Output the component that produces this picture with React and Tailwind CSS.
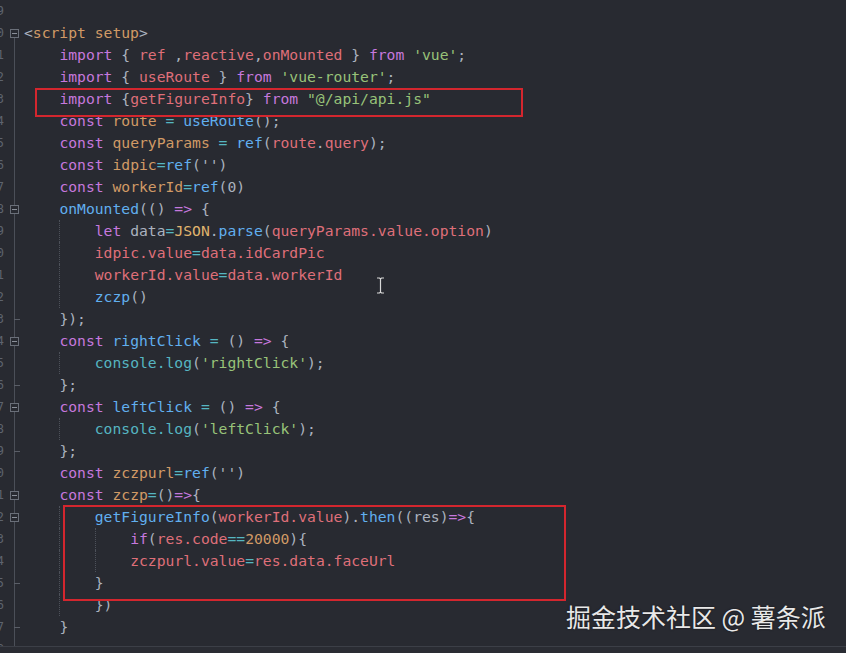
const P = "text-[#abb2bf]";
const K = "text-[#c678dd]";
const R = "text-[#df6f79]";
const O = "text-[#d19a66]";
const Y = "text-[#e0b56e]";
const B = "text-[#61afef]";
const C = "text-[#56b6c2]";
const G = "text-[#98c379]";

const lines = [
  { n: 9, indent: 0, fold: "none", t: [] },
  { n: 10, indent: 0, fold: "start", t: [["<", P], ["script setup", O], [">", P]] },
  { n: 11, indent: 1, t: [["import", K], [" { ", P], ["ref", R], [" ,", P], ["reactive", R], [",", P], ["onMounted", R], [" } ", P], ["from", K], [" ", P], ["'vue'", G], [";", P]] },
  { n: 12, indent: 1, t: [["import", K], [" { ", P], ["useRoute", R], [" } ", P], ["from", K], [" ", P], ["'vue-router'", G], [";", P]] },
  { n: 13, indent: 1, t: [["import", K], [" {", P], ["getFigureInfo", R], ["} ", P], ["from", K], [" ", P], ['"@/api/api.js"', G]] },
  { n: 14, indent: 1, t: [["const", K], [" ", P], ["route", O], [" ", P], ["=", C], [" ", P], ["useRoute", B], ["();", P]] },
  { n: 15, indent: 1, t: [["const", K], [" ", P], ["queryParams", O], [" ", P], ["=", C], [" ", P], ["ref", B], ["(", P], ["route", R], [".", P], ["query", R], [");", P]] },
  { n: 16, indent: 1, t: [["const", K], [" ", P], ["idpic", O], ["=", C], ["ref", B], ["('')", P]] },
  { n: 17, indent: 1, t: [["const", K], [" ", P], ["workerId", O], ["=", C], ["ref", B], ["(0)", P]] },
  { n: 18, indent: 1, fold: "box", t: [["onMounted", B], ["(() ", P], ["=>", K], [" {", P]] },
  { n: 19, indent: 2, t: [["let", K], [" data", P], ["=", C], ["JSON", Y], [".", P], ["parse", B], ["(", P], ["queryParams.value.option", R], [")", P]] },
  { n: 20, indent: 2, t: [["idpic.value", R], ["=", C], ["data.idCardPic", R]] },
  { n: 21, indent: 2, t: [["workerId.value", R], ["=", C], ["data.workerId", R]] },
  { n: 22, indent: 2, t: [["zczp", B], ["()", P]] },
  { n: 23, indent: 1, fold: "end", t: [["});", P]] },
  { n: 24, indent: 1, fold: "box", t: [["const", K], [" ", P], ["rightClick", B], [" ", P], ["=", C], [" () ", P], ["=>", K], [" {", P]] },
  { n: 25, indent: 2, t: [["console.log", C], ["(", P], ["'rightClick'", G], [");", P]] },
  { n: 26, indent: 1, fold: "end", t: [["};", P]] },
  { n: 27, indent: 1, fold: "box", t: [["const", K], [" ", P], ["leftClick", B], [" ", P], ["=", C], [" () ", P], ["=>", K], [" {", P]] },
  { n: 28, indent: 2, t: [["console.log", C], ["(", P], ["'leftClick'", G], [");", P]] },
  { n: 29, indent: 1, fold: "end", t: [["};", P]] },
  { n: 30, indent: 1, t: [["const", K], [" ", P], ["zczpurl", O], ["=", C], ["ref", B], ["('')", P]] },
  { n: 31, indent: 1, fold: "box", t: [["const", K], [" ", P], ["zczp", O], ["=", C], ["()", P], ["=>", K], ["{", P]] },
  { n: 32, indent: 2, fold: "box", t: [["getFigureInfo", B], ["(", P], ["workerId.value", R], [").", P], ["then", B], ["((res)", P], ["=>", K], ["{", P]] },
  { n: 33, indent: 3, t: [["if", K], ["(", P], ["res.code", R], ["==", C], ["20000", O], ["){", P]] },
  { n: 34, indent: 3, t: [["zczpurl.value", R], ["=", C], ["res.data.faceUrl", R]] },
  { n: 35, indent: 2, fold: "end", t: [["}", P]] },
  { n: 36, indent: 2, t: [["})", P]] },
  { n: 37, indent: 1, fold: "end", t: [["}", P]] },
  { n: 38, indent: 0, t: [] },
];

function FoldMark({ kind }) {
  if (kind === "none") return null;
  return (
    <>
      <div className={kind === "start" ? "absolute left-[10px] top-1/2 bottom-0 w-px bg-[#4b4f58]" : "absolute left-[10px] top-0 bottom-0 w-px bg-[#4b4f58]"} />
      {(kind === "start" || kind === "box") && (
        <div className="absolute left-[6px] top-[7px] flex h-[9px] w-[9px] items-center justify-center border border-[#6a6f79] bg-[#282a31]">
          <div className="h-px w-[5px] bg-[#8a8f99]" />
        </div>
      )}
      {kind === "end" && <div className="absolute left-[10px] top-[11px] h-px w-[6px] bg-[#5a5e67]" />}
    </>
  );
}

function CodeLine({ l }) {
  const guides = [];
  for (let i = 0; i < l.indent; i++) {
    guides.push(
      <span
        key={i}
        className={i === 0 ? "inline-block h-full w-[35.4px]" : "inline-block h-full w-[35.4px] border-l border-dotted border-[#4d515a]"}
      />
    );
  }
  return (
    <div className="flex h-[22px]">
      <div className="flex h-full w-[4px] justify-end overflow-hidden">
        <span className="font-['DejaVu_Sans_Mono',monospace] text-[12px] leading-[22px] text-[#5d636e]">{l.n}</span>
      </div>
      <div className="relative h-full w-[20px]">
        <FoldMark kind={l.fold} />
      </div>
      <div className="flex h-full items-stretch whitespace-pre font-['DejaVu_Sans_Mono',monospace] text-[14.7px] leading-[22px]">
        {guides}
        <span>
          {l.t.map(([txt, cls], i) => (
            <span key={i} className={cls}>{txt}</span>
          ))}
        </span>
      </div>
    </div>
  );
}

export default function App() {
  return (
    <div className="flex h-[653px] w-[846px] flex-col overflow-hidden bg-[#282a31]">
      <div className="relative h-[646px] overflow-hidden">
        {lines.map((l) => (
          <CodeLine key={l.n} l={l} />
        ))}

        {/* highlight boxes */}
        <div className="absolute left-[35px] top-[88px] h-[29px] w-[488px] border-2 border-[#d4262e]" />
        <div className="absolute left-[63px] top-[505px] h-[96px] w-[503px] border-2 border-[#d4262e]" />

        {/* mouse cursor */}
        <svg className="absolute left-[376px] top-[277px]" width="9" height="17" viewBox="0 0 9 17">
          <path d="M1 1h2.5l1 1 1-1H8M4.5 2v13M1 16h2.5l1-1 1 1H8" fill="none" stroke="#d8d8d8" strokeWidth="1.2" />
        </svg>

        {/* watermark */}
        <div className="absolute left-[566px] top-[604px] whitespace-nowrap font-['Noto_Sans_CJK_SC',sans-serif] text-[25px] leading-none text-[#e8e8e8] [text-shadow:0_0_2px_rgba(0,0,0,0.6)]">
          掘金技术社区 @ 薯条派
        </div>
      </div>
      <div className="h-px bg-[#3c3f47]" />
      <div className="flex-1 bg-[#2a2c33]" />
    </div>
  );
}
